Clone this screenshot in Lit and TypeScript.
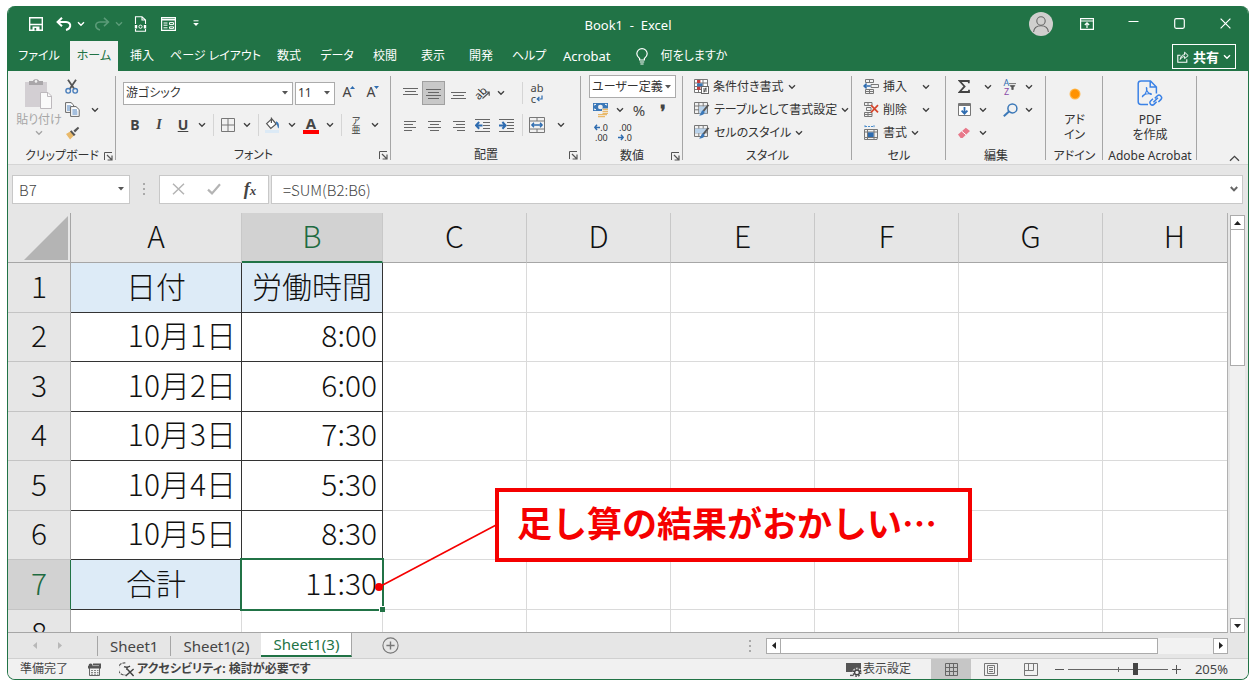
import { LitElement, html, css, svg, nothing, TemplateResult } from "lit";
import { customElement, property, state } from "lit/decorators.js";
import { classMap } from "lit/directives/class-map.js";

/* ---------- icon set ---------- */

const icon = (w: number, h: number, body: unknown) =>
  html`<svg width=${w} height=${h} viewBox="0 0 ${w} ${h}" fill="none" aria-hidden="true">${body}</svg>`;

const lines = (spec: [number, number, number][], color = "#666") =>
  svg`${spec.map(([x, y, w]) => svg`<rect x=${x} y=${y} width=${w} height="1" fill=${color} />`)}`;

const chevron = (color = "#444") =>
  icon(8, 6, svg`<path d="M1 1.2 4 4.2 7 1.2" stroke=${color} stroke-width="1.4" />`);

const triDown = () => icon(6, 4, svg`<path d="M0 0H6L3 3.6Z" fill="#555" />`);

const grid9 = svg`<path d="M.5 .5H13.5V11.5H.5ZM.5 4H13.5M.5 7.8H13.5M4.8 .5V11.5M9.2 .5V11.5" stroke="#777" />`;

const brush = svg`<path d="M15.3 3.2 10.2 9.6 8.6 8.4 13.6 2.4Z" fill="#555" /><path d="M8.8 8.2 10.6 9.8C10.5 12.5 8 14 5 13.2 7.2 12.4 6.8 9 8.8 8.2Z" fill="#3b78b8" />`;

const icons: Record<string, () => TemplateResult> = {
  save: () => icon(14, 14, svg`<path d="M.7 .7H13.3V13.3H.7Z" stroke="#fff" stroke-width="1.4" /><path d="M1 7.5H13" stroke="#fff" stroke-width="1.4" /><path d="M3.5 14V9.5H10.5V14Z" fill="#fff" /><path d="M5.5 11H7.2V13.4H5.5Z" fill="#217346" />`),
  undo: () => icon(16, 14, svg`<path d="M6 .8 1.6 5 6 9.2M2 5H10C13 5 14.6 7 14.2 9.2 13.9 11.2 12.4 12.4 10 13" stroke="#fff" stroke-width="2" />`),
  redo: () => icon(16, 14, svg`<path d="M10 .8 14.4 5 10 9.2M14 5H6C3 5 1.4 7 1.8 9.2 2.1 11.2 3.6 12.4 6 13" stroke="#5b9b78" stroke-width="1.6" />`),
  preview: () => icon(13, 16, svg`<path d="M1.5 8V.7H8L11.5 4V8M8 .7V4H11.5" stroke="#fff" stroke-width="1.1" /><path d="M.8 9H3.2V12.4H.8ZM9.8 9H12.2V12.4H9.8Z" fill="#fff" /><circle cx="6.5" cy="10.7" r="1.6" stroke="#fff" /><path d="M1.5 13V15.3H11.5V13" stroke="#fff" stroke-width="1.1" />`),
  form: () => icon(15, 14, svg`<path d="M.6 .6H14.4V13.4H.6Z" stroke="#fff" stroke-width="1.2" /><path d="M1 2.6H14" stroke="#fff" stroke-width="1.6" /><path d="M2.5 6H6.5M2.5 8.2H6.5M2.5 10.8H6.5M8.5 5.6H12.5V7.6H8.5ZM8.5 9.8H12.5V11.4H8.5Z" stroke="#fff" />`),
  more: () => icon(6, 7, svg`<path d="M.5 .8H5.5" stroke="#fff" /><path d="M.2 3H5.8L3 6Z" fill="#fff" />`),
  avatar: () => icon(24, 24, svg`<circle cx="12" cy="12" r="12" fill="#d0cfce" /><circle cx="12" cy="9" r="4.2" stroke="#666" stroke-width="1.1" /><path d="M4.6 20C5 15.6 8 13.8 12 13.8S19 15.6 19.4 20" stroke="#666" stroke-width="1.1" />`),
  ribbonOpts: () => icon(14, 12, svg`<path d="M.6 .6H13.4V11.4H.6ZM.6 3H13.4" stroke="#fff" stroke-width="1.2" /><path d="M7 10V5M4.8 7 7 4.8 9.2 7" stroke="#fff" stroke-width="1.2" />`),
  min: () => icon(11, 11, svg`<path d="M.5 3.5H10.5" stroke="#fff" stroke-width="1.2" />`),
  max: () => icon(11, 11, svg`<rect x=".7" y=".7" width="9.6" height="9.6" rx="1.5" stroke="#fff" stroke-width="1.2" />`),
  close: () => icon(11, 11, svg`<path d="M.6 .6 10.4 10.4M10.4 .6 .6 10.4" stroke="#fff" stroke-width="1.2" />`),
  bulb: () => icon(12, 17, svg`<path d="M3.6 12V10.4C2 9.2 .8 7.8 .8 5.8A5.2 5.2 0 0 1 11.2 5.8C11.2 7.8 10 9.2 8.4 10.4V12ZM3.8 14H8.2M4.4 16H7.6" stroke="#fff" stroke-width="1.2" />`),
  share: () => icon(12, 12, svg`<path d="M3.5 4.2H.8V11.2H9.8V8.2" stroke="#fff" stroke-width="1.1" /><path d="M3.2 8.5C3.4 5.5 5 3.8 7.6 3.8V1.2L11.2 4.6 7.6 7.6V5.6C5.6 5.6 4.2 6.5 3.2 8.5Z" stroke="#fff" />`),
  paste: () => icon(28, 32, svg`<rect x="0" y="4" width="22" height="25" fill="#d3cfd3" /><path d="M4 3H8C8 .5 14 .5 14 3H18V7H4Z" fill="#a9a6a9" /><circle cx="11" cy="3.4" r="1.3" fill="#f1f1f1" /><path d="M15.5 14.5H23L26.5 18V30.5H15.5Z" fill="#fafafa" stroke="#bdb9bd" /><path d="M22.5 14.5V18.5H26.5" stroke="#bdb9bd" />`),
  cut: () => icon(14, 15, svg`<path d="M3 .8 9.3 10M11 .8 4.7 10" stroke="#555" stroke-width="1.8" /><circle cx="3.2" cy="11.8" r="2.3" stroke="#4a7ebb" stroke-width="1.4" /><circle cx="10.2" cy="11.8" r="2.3" stroke="#4a7ebb" stroke-width="1.4" />`),
  copy: () => icon(15, 15, svg`<path d="M.6 .6H6L8.6 3V10.4H.6Z" fill="#fff" stroke="#666" /><path d="M2 4H6M2 6H6M2 8H5" stroke="#4a7ebb" /><path d="M5.6 4.6H11L14.2 7.6V14.4H5.6Z" fill="#fff" stroke="#666" /><path d="M7.4 8H12M7.4 10H12.4M7.4 12H12.4" stroke="#4a7ebb" />`),
  painter: () => icon(15, 14, svg`<path d="M1 8 6 5 9.5 9 5 13.5C4 12 2.5 10 1 8Z" fill="#e9b96a" /><path d="M6.4 4.2 10.6 8.8 8.8 10 5 5.4Z" fill="#555" /><path d="M8.5 4.5 13 .8 14.2 2.2 10 6.4Z" fill="#555" />`),
  launcher: () => icon(9, 9, svg`<path d="M.5 8V.5H8" stroke="#555" /><path d="M3 3 7.5 7.5M8 3.6V8H3.6" stroke="#555" stroke-width="1.2" />`),
  borders: () => icon(14, 14, svg`<path d="M.5 .5H13.5V13.5H.5ZM7 .5V13.5M.5 7H13.5" stroke="#777" />`),
  fill: () => icon(16, 16, svg`<rect x="0" y="13" width="14" height="3" fill="#dceaf6" /><path d="M1.6 6.6 6.8 1.8 11.2 7 5.8 11.4Z" fill="#fff" stroke="#555" stroke-width="1.2" /><path d="M6.4 6V.6" stroke="#555" stroke-width="1.2" /><path d="M11 4.2C13.8 5 14.6 8 13.6 11.6 12.4 10.8 12.6 8 11 6.2Z" fill="#3b78b8" />`),
  alignTop: () => icon(15, 15, lines([[0, 2, 15], [2, 5, 11], [0, 8, 15]])),
  alignMid: () => icon(15, 15, lines([[0, 3, 15], [2, 6, 11], [0, 9, 15], [2, 12, 11]])),
  alignBot: () => icon(15, 15, lines([[0, 6, 15], [2, 9, 11], [0, 12, 15], [2, 15, 11]])),
  alignL: () => icon(13, 13, lines([[0, 2, 12], [0, 5, 9], [0, 8, 12], [0, 11, 8]])),
  alignC: () => icon(13, 13, lines([[0, 2, 13], [2, 5, 9], [0, 8, 13], [2, 11, 9]])),
  alignR: () => icon(13, 13, lines([[1, 2, 12], [4, 5, 9], [1, 8, 12], [5, 11, 8]])),
  outdent: () => icon(15, 13, svg`${lines([[0, 0, 15], [8, 3, 7], [8, 6, 7], [8, 9, 7], [0, 12, 15]])}<path d="M4.2 3 1 6.4 4.2 9.8M1 6.4H7.5" stroke="#2e6cb0" stroke-width="2" />`),
  indent: () => icon(15, 13, svg`${lines([[0, 0, 15], [8, 3, 7], [8, 6, 7], [8, 9, 7], [0, 12, 15]])}<path d="M3.4 3 6.6 6.4 3.4 9.8M6.6 6.4H0" stroke="#2e6cb0" stroke-width="2" />`),
  wrapArrow: () => icon(7, 7, svg`<path d="M6 .5V4H1.5M3.4 1.8 1.2 4 3.4 6.2" stroke="#2e6cb0" stroke-width="1.2" />`),
  slope: () => icon(8, 8, svg`<path d="M.5 7.5 7 1.5M3.5 1H7.2V4.8" stroke="#555" stroke-width="1.2" />`),
  merge: () => icon(16, 16, svg`<path d="M.5 .5H15.5V15.5H.5ZM.5 4H15.5M.5 12H15.5M8 .5V4M8 12V15.5" stroke="#777" /><path d="M3 8H13M5 5.8 2.8 8 5 10.2M11 5.8 13.2 8 11 10.2" stroke="#2e6cb0" stroke-width="1.3" />`),
  money: () => icon(16, 16, svg`<rect x="0" y="1" width="15" height="8" fill="#3b78b8" /><path d="M1.4 3.4V2.4H3M12 2.4H13.6V3.4M1.4 6.6V7.6H3" stroke="#fff" /><ellipse cx="7.4" cy="5" rx="2.4" ry="2.2" fill="#f1f1f1" /><path d="M9 6.5H15V9H9ZM7 9.5H15V15H5V12H7Z" fill="#f1f1f1" /><path d="M9.5 7.4H15M9.5 9.4H15M9.5 11.4H15M5 12.6H14M5 14.6H12" stroke="#e9b96a" stroke-width="1.3" />`),
  decLeft: () => icon(6, 7, svg`<path d="M3 .8 .8 3.4 3 6M.8 3.4H6" stroke="#2e6cb0" stroke-width="1.5" />`),
  decRight: () => icon(6, 7, svg`<path d="M3 .8 5.2 3.4 3 6M5.2 3.4H0" stroke="#2e6cb0" stroke-width="1.5" />`),
  cond: () => icon(15, 15, svg`<path d="M.5 .5H13.5V13.5H.5ZM.5 4H13.5M.5 7.5H13.5M.5 10.5H13.5M4.5 .5V13.5M9 .5V13.5" stroke="#777" fill="#fff" /><rect x="3" y="1" width="3.4" height="3" fill="#c43e3e" /><rect x="3" y="4.4" width="5.6" height="3" fill="#3b78b8" /><rect x="3" y="7.8" width="3.4" height="3" fill="#c43e3e" /><rect x="7.5" y="7.5" width="7" height="7" fill="#fff" stroke="#666" /><path d="M9 10H13M9 12H13M12 8.6 10 13.4" stroke="#444" stroke-width=".9" />`),
  tableFmt: () => icon(16, 15, svg`${grid9}<rect x="5" y="4.4" width="8" height="7" fill="#b9d2ea" />${brush}`),
  cellFmt: () => icon(16, 15, svg`${grid9}<rect x="1" y="3.6" width="11" height="4.6" fill="#b9d2ea" />${brush}`),
  insert: () => icon(16, 15, svg`<path d="M2.5 .5H10.5V3.5H2.5ZM6.5 .5V3.5M2.5 10.5H10.5V14.5H2.5ZM6.5 10.5V14.5M2.5 12.5H10.5M8 5.5H15.5V8.5H8Z" stroke="#777" /><path d="M7.5 7H1.2M3.6 4.6 1 7 3.6 9.4" stroke="#2e6cb0" stroke-width="1.5" />`),
  remove: () => icon(16, 15, svg`<path d="M1.5 .5H9V3.5H1.5ZM5 .5V3.5M1.5 10.5H9V14.5H1.5ZM5 10.5V14.5M1.5 12.5H9M3.5 5.5H8V8.5H3.5Z" stroke="#777" /><path d="M8 3.2 15 10.4M15 3.2 8 10.4" stroke="#d5452b" stroke-width="1.7" />`),
  format: () => icon(16, 16, svg`<path d="M2 1.5H11M2 .2V2.8M11 .2V2.8" stroke="#4a8ccb" stroke-dasharray="2 1" /><path d="M1.5 4.5H14.5V12.5H1.5ZM4.5 4.5V14.5M11 4.5V14.5M1.5 7H14.5M1.5 12.5V14.5H14L14.5 12" stroke="#777" /><rect x="5" y="7.4" width="5.6" height="4.6" fill="#2e6cb0" />`),
  sigma: () => icon(12, 13, svg`<path d="M10.8 3.2V1H1.6L6.6 6.4 1.6 12H11V9.8" stroke="#444" stroke-width="1.8" />`),
  fillDown: () => icon(13, 13, svg`<path d="M.5 .5H12.5V12.5H.5Z" fill="#fff" stroke="#777" /><path d="M.5 2H12.5" stroke="#777" stroke-width="2" /><path d="M6.5 4V10.4M3.6 7.6 6.5 10.6 9.4 7.6" stroke="#2e6cb0" stroke-width="1.8" />`),
  eraser: () => icon(14, 12, svg`<path d="M1 7.4 8.8 .8 13 4 5.6 11H3.6Z" fill="#e8788a" /><path d="M4.8 4.2 9 7.8" stroke="#fff" />`),
  funnel: () => icon(7, 7, svg`<path d="M0 .6H7M1.2 2.6H5.8L4.2 4.6V6.6H2.8V4.6Z" stroke="#555" fill="#555" stroke-width=".8" />`),
  find: () => icon(15, 14, svg`<circle cx="9.4" cy="5.4" r="4.5" stroke="#3b78b8" stroke-width="1.5" /><path d="M6 8.6 .8 13.2" stroke="#3b78b8" stroke-width="2" />`),
  dot: () => icon(12, 12, svg`<circle cx="6" cy="6" r="5.5" fill="#ffb84d" /><circle cx="6" cy="6" r="4.4" fill="#ff9200" />`),
  pdf: () => icon(26, 28, svg`<path d="M11 24.5H4C2.4 24.5 1.2 23.4 1.2 21.8V3.6C1.2 2 2.4 1 4 1H13.5L19.4 7V13.4M13.2 1.2V7H19.2" stroke="#3b82e6" stroke-width="1.5" /><path d="M9.4 7.6C11 8 8.4 15.6 5.4 16.8 4.6 14.6 13.4 12.4 14.4 14 13 15.6 8.6 10.4 9.4 7.6Z" stroke="#3b82e6" stroke-width="1.2" /><path d="M17.8 18.4 20.4 15.8C22.6 13.8 26 17 24 19.4L21.4 22M19.6 21.8 17 24.4C14.8 26.6 11.4 23.2 13.6 21L16 18.8M16.4 22.2 21 17.8" stroke="#3b82e6" stroke-width="1.5" />`),
  collapse: () => icon(11, 7, svg`<path d="M1 5.8 5.5 1.4 10 5.8" stroke="#444" stroke-width="1.3" />`),
  dots: () => icon(3, 12, svg`<path d="M0 0H2V2H0ZM0 5H2V7H0ZM0 10H2V12H0Z" fill="#aaa" />`),
  cancel: () => icon(13, 12, svg`<path d="M1 .8 12 11.2M12 .8 1 11.2" stroke="#b4b4b4" stroke-width="1.5" />`),
  ok: () => icon(14, 12, svg`<path d="M1 6.6 5 10.4 13 1.2" stroke="#b4b4b4" stroke-width="2.2" />`),
  up: () => icon(7, 4, svg`<path d="M0 4H7L3.5 0Z" fill="#222" />`),
  down: () => icon(7, 4, svg`<path d="M0 0H7L3.5 4Z" fill="#222" />`),
  left: () => icon(4, 7, svg`<path d="M4 0V7L0 3.5Z" fill="#222" />`),
  right: () => icon(4, 7, svg`<path d="M0 0V7L4 3.5Z" fill="#222" />`),
  leftDim: () => icon(4, 7, svg`<path d="M4 0V7L0 3.5Z" fill="#b8b8b8" />`),
  rightDim: () => icon(4, 7, svg`<path d="M0 0V7L4 3.5Z" fill="#b8b8b8" />`),
  plus: () => icon(17, 17, svg`<circle cx="8.5" cy="8.5" r="7.6" stroke="#777" stroke-width="1.1" /><path d="M8.5 4.4V12.6M4.4 8.5H12.6" stroke="#777" stroke-width="1.4" />`),
  macro: () => icon(13, 13, svg`<path d="M1.5 3.5H11.5V12.5H1.5Z" stroke="#666" /><path d="M5 1.5H12V4.5H1V3" stroke="#555" stroke-width="2" /><circle cx="2.6" cy="2.6" r="2" fill="#555" /><path d="M3 7.5H10.5M3 9.5H10.5M3 11.2H10.5" stroke="#888" stroke-dasharray="2 1" />`),
  access: () => icon(16, 15, svg`<path d="M6.4 1A6 6 0 1 0 6.4 12.8" stroke="#555" stroke-width="1.1" stroke-dasharray="3 1" /><path d="M5 4.6C7 5.4 9 5.4 11 4.2M8 5.2V8M8.6 7.6 14.6 14M14.6 7 6.6 14" stroke="#444" stroke-width="1.5" />`),
  display: () => icon(16, 15, svg`<path d="M0 1H15V10H0Z" fill="#555" /><path d="M4 13.4H9" stroke="#555" stroke-width="1.4" /><circle cx="11" cy="10.4" r="4.6" fill="#f1f1f1" /><circle cx="11" cy="10.4" r="2.4" stroke="#444" stroke-width="1.4" /><circle cx="11" cy="10.4" r="3.8" stroke="#444" stroke-width="1.4" stroke-dasharray="1.6 1.4" />`),
  viewNormal: () => icon(13, 13, svg`<path d="M.5 .5H12.5V12.5H.5ZM4.5 .5V12.5M8.5 .5V12.5M.5 4.5H12.5M.5 8.5H12.5" stroke="#666" />`),
  viewPage: () => icon(14, 13, svg`<path d="M.5 .5H13.5V12.5H.5ZM3.5 2.5H10.5V10.5H3.5Z" stroke="#777" /><path d="M5 4.5H9M5 6.5H9M5 8.5H9" stroke="#777" />`),
  viewBreak: () => icon(14, 13, svg`<path d="M.5 .5H13.5V12.5H.5ZM.5 7.5H9.5V.5M4.5 .5V7.5" stroke="#777" />`),
};

const drop = (label: string, color?: string) =>
  html`<button class="chev" aria-label=${label}>${chevron(color)}</button>`;

const tool = (name: string, label: string) =>
  html`<button class="tool" aria-label=${label}>${icons[name]()}</button>`;

const named = (name: string, text: string, wide = false) =>
  html`<button class=${classMap({ named: true, wide })}>${icons[name]()}<span>${text}</span>${chevron()}</button>`;

/* ---------- shared styles ---------- */

const base = css`
  :host, * { box-sizing: border-box; }
  button, input, select {
    font: inherit; color: inherit; background: none; border: 0; margin: 0; padding: 0;
    font-feature-settings: inherit; border-radius: 0; outline: none;
  }
  button { display: inline-flex; align-items: center; justify-content: center; white-space: nowrap; }
  svg { display: block; flex: none; }
  select { appearance: none; }
`;

/* ---------- title bar and tabs ---------- */

@customElement("xl-header")
export class XlHeader extends LitElement {
  @state() active = "ホーム";

  static styles = [base, css`
    :host { display: block; background: #217346; color: #fff; }
    .title { display: grid; grid-template-columns: 1fr auto 1fr; align-items: center; height: 35px; }
    .quick { display: flex; align-items: center; padding-left: 14px; }
    .quick button { width: 28px; height: 28px; }
    .quick .arrow { width: 10px; margin-right: 2px; margin-left: -2px; }
    .name { white-space: pre; font-size: 13px; padding-top: 2px; }
    .win { display: flex; justify-content: flex-end; }
    .win button { width: 46px; height: 34px; }
    nav { display: flex; align-items: stretch; height: 30px; padding-right: 12px; }
    .tab { width: 48px; }
    .tab.first { width: 62px; }
    .tab.long { width: auto; padding: 0 4px; }
    .tab.latin { width: auto; padding: 0 10px; font-size: 13px; }
    .tab.on { background: #f1f1f1; color: #217346; }
    .tell { gap: 13px; padding-left: 15px; }
    .share { margin: 3px 0 2px auto; padding: 0 4px; gap: 4px; border: 1px solid #fff; font-weight: 700; font-size: 13px; }
  `];

  render() {
    const tabs = ["ファイル", "ホーム", "挿入", "ページ レイアウト", "数式", "データ", "校閲", "表示", "開発", "ヘルプ", "Acrobat"];
    return html`
      <div class="title">
        <div class="quick">
          <button aria-label="上書き保存">${icons.save()}</button>
          <button aria-label="元に戻す">${icons.undo()}</button>
          <button class="arrow" aria-label="元に戻す履歴">${chevron("#fff")}</button>
          <button aria-label="やり直し">${icons.redo()}</button>
          <button class="arrow" aria-label="やり直し履歴">${chevron("#5b9b78")}</button>
          <button aria-label="印刷プレビュー">${icons.preview()}</button>
          <button aria-label="フォーム">${icons.form()}</button>
          <button aria-label="カスタマイズ">${icons.more()}</button>
        </div>
        <div class="name">Book1  -  Excel</div>
        <div class="win">
          <button aria-label="アカウント">${icons.avatar()}</button>
          <button aria-label="リボンの表示オプション">${icons.ribbonOpts()}</button>
          <button aria-label="最小化">${icons.min()}</button>
          <button aria-label="最大化">${icons.max()}</button>
          <button aria-label="閉じる">${icons.close()}</button>
        </div>
      </div>
      <nav>
        ${tabs.map((t, i) => html`<button
          class=${classMap({ tab: true, first: i === 0, long: t.length > 7, latin: t === "Acrobat", on: t === this.active })}
          @click=${() => (this.active = t)}>${t}</button>`)}
        <button class="tell">${icons.bulb()}<span>何をしますか</span></button>
        <button class="share">${icons.share()}<span>共有</span>${chevron("#fff")}</button>
      </nav>`;
  }
}

/* ---------- ribbon ---------- */

@customElement("xl-group")
export class XlGroup extends LitElement {
  @property() label = "";
  @property({ type: Boolean }) launcher = false;

  static styles = [base, css`
    :host { display: flex; flex-direction: column; flex: none; background: linear-gradient(#a6a6a6, #a6a6a6) right 1px / 1px 84px no-repeat; }
    .body { height: 69px; }
    .foot { display: grid; grid-template-columns: 16px 1fr 16px; align-items: center; height: 18px; margin-top: 3px; text-align: center; white-space: nowrap; }
    .foot.plain { grid-template-columns: 1fr; }
    .foot span { display: flex; justify-content: center; }
    .foot button { height: 18px; }
  `];

  render() {
    return html`
      <div class="body"><slot></slot></div>
      <div class=${classMap({ foot: true, plain: !this.launcher })}>
        ${this.launcher ? html`<i></i>` : nothing}
        <span>${this.label}</span>
        ${this.launcher ? html`<button aria-label="${this.label}の設定">${icons.launcher()}</button>` : nothing}
      </div>`;
  }
}

@customElement("xl-ribbon")
export class XlRibbon extends LitElement {
  static styles = [base, css`
    :host { display: flex; background: #f1f1f1; padding: 4px 0 0; height: 94px; border-bottom: 1px solid #d5d5d5; }
    .w-clip { width: 108px; } .w-font { width: 275px; } .w-align { width: 190px; }
    .w-num { width: 102px; } .w-style { width: 169px; } .w-cell { width: 94px; }
    .w-edit { width: 100px; } .w-add { width: 57px; } .w-pdf { width: 94px; }
    .row { display: flex; align-items: center; height: 23px; }
    .two { display: grid; grid-template-rows: 24px 24px; row-gap: 8px; padding: 6px 0 0 7px; }
    .two .row { height: 24px; }
    .tool { width: 24px; height: 24px; }
    .chev { width: 14px; height: 22px; }
    .gap { width: 5px; }
    .sep { width: 1px; height: 22px; margin: 0 2px 0 4px; background: #d5d5d5; }
    .sep.far { margin-left: 14px; }
    .box { display: grid; align-items: center; height: 23px; margin-right: 2px; background: #fff; border: 1px solid #ababab; }
    .box select, .box svg { grid-area: 1 / 1; }
    .box select { width: 100%; padding-left: 2px; color: #333; }
    .box svg { justify-self: end; margin-right: 4px; pointer-events: none; }
    .box.name { width: 170px; } .box.size { width: 40px; } .box.format { width: 87px; }
    .bold { font-weight: 700; font-size: 14px; color: #444; }
    .italic { font-style: italic; font-family: "Liberation Serif", serif; }
    .under { text-decoration: underline; }
    .grow { font-size: 14px; color: #444; align-items: flex-start; padding-top: 3px; }
    .grow svg { margin-left: -1px; }
    .ink { flex-direction: column; font-weight: 700; font-size: 15px; line-height: 13px; color: #444; border-bottom: 4px solid red; width: 16px; height: 17px; margin: 0 4px; }
    .ruby { flex-direction: column; font-size: 9px; line-height: 9px; }
    .ruby span { height: 9px; }
    .on { background: #c8c8c8; border: 1px solid #a0a0a0; width: 23px; margin-right: 1px; }
    .clip { display: grid; grid-template-columns: 56px 16px 1fr; }
    .paste { flex-direction: column; color: #a6a6a6; gap: 2px; justify-content: flex-start; padding: 3px 0 0 6px; }
    .stack { display: grid; grid-template-rows: repeat(3, 23px); align-items: center; }
    .stack .tool { width: 16px; height: 23px; }
    .stack .chev { margin-left: 8px; }
    .named { height: 23px; gap: 4px; justify-content: flex-start; padding-left: 11px; width: 100%; }
    .named.wide span { flex: 1; text-align: left; }
    .named.wide { padding-right: 16px; }
    .named span { white-space: nowrap; }
    .num { padding-left: 8px; }
    .pct { font-size: 15px; color: #444; }
    .comma { font-weight: 700; font-size: 18px; color: #444; padding-top: 3px; }
    .dec { display: grid; grid-template-columns: auto auto; justify-content: center; align-content: center; align-items: center; font-size: 9px; line-height: 10px; color: #333; }
    .dec .full { grid-column: 1 / 3; text-align: right; }
    .edit { display: grid; grid-template-columns: 46px 1fr; padding-left: 6px; }
    .wrap { display: grid; grid-template-columns: auto auto; justify-content: center; align-content: center; align-items: center; font-size: 11px; line-height: 11px; color: #444; }
    .wrap .full { grid-column: 1 / 3; }
    .diag { display: inline-block; transform: rotate(-45deg); font-size: 11px; }
    .slope svg { margin-left: -4px; margin-top: 4px; }
    .az { display: grid; font-size: 9px; line-height: 9px; color: #2e6cb0; }
    .az b { font-weight: 400; }
    .az b + b { color: #8a4aa8; }
    .big { flex-direction: column; width: 100%; height: 69px; justify-content: flex-start; line-height: 15px; }
    .big svg { height: 28px; margin: 5px 0 4px; }
    .tail { flex: 1; display: flex; align-items: flex-end; justify-content: flex-end; padding: 0 8px 2px 0; }
  `];

  render() {
    return html`
      <xl-group class="w-clip" label="クリップボード" launcher>
        <div class="clip">
          <button class="paste">${icons.paste()}<span>貼り付け</span>${chevron("#a6a6a6")}</button>
          <div class="stack">
            ${tool("cut", "切り取り")}${tool("copy", "コピー")}${tool("painter", "書式のコピー")}
          </div>
          <div class="stack"><i></i>${drop("コピーのオプション")}</div>
        </div>
      </xl-group>

      <xl-group class="w-font" label="フォント" launcher>
        <div class="two">
          <div class="row">
            <label class="box name"><select aria-label="フォント名"><option>游ゴシック</option></select>${triDown()}</label>
            <label class="box size"><select aria-label="フォント サイズ"><option>11</option></select>${triDown()}</label>
            <button class="tool grow" aria-label="拡大">A${icon(5, 8, svg`<path d="M0 5 2.5 2 5 5Z" fill="#2e6cb0" />`)}</button>
            <button class="tool grow" aria-label="縮小">A${icon(5, 8, svg`<path d="M0 2H5L2.5 5Z" fill="#2e6cb0" />`)}</button>
          </div>
          <div class="row">
            <button class="tool bold">B</button>
            <button class="tool bold italic">I</button>
            <button class="tool bold under">U</button>
            ${drop("下線")}<i class="sep"></i>
            ${tool("borders", "罫線")}${drop("罫線の種類")}<i class="sep"></i>
            ${tool("fill", "塗りつぶしの色")}${drop("塗りつぶしの色の選択")}
            <button class="ink">A</button>${drop("フォントの色の選択")}<i class="sep"></i>
            <button class="tool ruby"><span>ア</span><span>亜</span></button>${drop("ふりがな")}
          </div>
        </div>
      </xl-group>

      <xl-group class="w-align" label="配置" launcher>
        <div class="two">
          <div class="row">
            ${tool("alignTop", "上揃え")}
            <button class="tool on" aria-label="上下中央揃え">${icons.alignMid()}</button>
            ${tool("alignBot", "下揃え")}
            <button class="tool slope" aria-label="方向"><span class="diag">ab</span>${icons.slope()}</button>
            ${drop("方向の選択")}<i class="sep far"></i>
            <button class="tool wrap"><span class="full">ab</span><span>c</span>${icons.wrapArrow()}</button>
          </div>
          <div class="row">
            ${tool("alignL", "左揃え")}${tool("alignC", "中央揃え")}${tool("alignR", "右揃え")}
            ${tool("outdent", "インデントを減らす")}${tool("indent", "インデントを増やす")}<i class="sep"></i>
            ${tool("merge", "セルを結合して中央揃え")}<i class="gap"></i>${drop("結合の選択")}
          </div>
        </div>
      </xl-group>

      <xl-group class="w-num" label="数値" launcher>
        <div class="num">
          <div class="row">
            <label class="box format"><select aria-label="表示形式"><option>ユーザー定義</option></select>${triDown()}</label>
          </div>
          <div class="row">
            ${tool("money", "通貨")}${drop("通貨の選択")}
            <button class="tool pct">%</button><button class="tool comma">❜</button>
          </div>
          <div class="row">
            <button class="tool dec">${icons.decLeft()}<span>.0</span><span class="full">.00</span></button>
            <button class="tool dec"><span class="full">.00</span>${icons.decRight()}<span>.0</span></button>
          </div>
        </div>
      </xl-group>

      <xl-group class="w-style" label="スタイル">
        <div class="stack">
          ${named("cond", "条件付き書式")}
          ${named("tableFmt", "テーブルとして書式設定")}
          ${named("cellFmt", "セルのスタイル")}
        </div>
      </xl-group>

      <xl-group class="w-cell" label="セル">
        <div class="stack">
          ${named("insert", "挿入", true)}
          ${named("remove", "削除", true)}
          ${named("format", "書式")}
        </div>
      </xl-group>

      <xl-group class="w-edit" label="編集">
        <div class="edit">
          <div>
            <div class="row">${tool("sigma", "オート SUM")}<i class="gap"></i>${drop("関数の選択")}</div>
            <div class="row">${tool("fillDown", "フィル")}${drop("フィルの選択")}</div>
            <div class="row">${tool("eraser", "クリア")}${drop("クリアの選択")}</div>
          </div>
          <div>
            <div class="row"><button class="tool" aria-label="並べ替えとフィルター"><span class="az"><b>A</b><b>Z</b></span>${icons.funnel()}</button>${drop("並べ替えの選択")}</div>
            <div class="row">${tool("find", "検索と選択")}${drop("検索の選択")}</div>
          </div>
        </div>
      </xl-group>

      <xl-group class="w-add" label="アドイン">
        <button class="big">${icons.dot()}<span>アド<br />イン</span></button>
      </xl-group>

      <xl-group class="w-pdf" label="Adobe Acrobat">
        <button class="big">${icons.pdf()}<span>PDF<br />を作成</span></button>
      </xl-group>

      <div class="tail"><button aria-label="リボンを折りたたむ">${icons.collapse()}</button></div>`;
  }
}

/* ---------- formula bar ---------- */

@customElement("xl-formula")
export class XlFormula extends LitElement {
  static styles = [base, css`
    :host { display: flex; align-items: center; height: 48px; padding: 0 5px 0 4px; background: #e6e6e6; color: #444; font-size: 15px; font-family: "Noto Sans CJK JP", sans-serif; font-weight: 300; }
    .field { display: flex; align-items: center; height: 29px; background: #fff; border: 1px solid #c8c8c8; }
    input { min-width: 0; flex: 1; height: 100%; padding-left: 6px; }
    .ref { width: 118px; padding-right: 5px; }
    .grip { width: 29px; display: flex; justify-content: center; }
    .acts { width: 110px; margin-right: 2px; justify-content: space-around; }
    .acts button { width: 36px; height: 27px; }
    .fx { font-family: "Liberation Serif", serif; font-style: italic; font-weight: 700; font-size: 18px; line-height: 20px; }
    .fx small { font-size: 13px; padding-top: 3px; }
    .text { flex: 1; padding-right: 4px; }
    .text input { padding-left: 11px; }
  `];

  render() {
    return html`
      <label class="field ref"><input aria-label="名前ボックス" .value=${"B7"} />${triDown()}</label>
      <span class="grip">${icons.dots()}</span>
      <div class="field acts">
        <button aria-label="キャンセル">${icons.cancel()}</button>
        <button aria-label="入力">${icons.ok()}</button>
        <button class="fx" aria-label="関数の挿入">f<small>x</small></button>
      </div>
      <label class="field text"><input aria-label="数式バー" .value=${"=SUM(B2:B6)"} />${icon(8, 6, svg`<path d="M.8 1 4 4.4 7.2 1" stroke="#666" stroke-width="2" />`)}</label>`;
  }
}

/* ---------- worksheet ---------- */

@customElement("xl-sheet")
export class XlSheet extends LitElement {
  private columns = ["A", "B", "C", "D", "E", "F", "G", "H"];
  private rows: string[][] = [
    ["日付", "労働時間"],
    ["10月1日", "8:00"],
    ["10月2日", "6:00"],
    ["10月3日", "7:30"],
    ["10月4日", "5:30"],
    ["10月5日", "8:30"],
    ["合計", "11:30"],
    [],
  ];

  static styles = [base, css`
    :host { display: flex; min-height: 0; background: #e6e6e6; }
    .view { position: relative; flex: 1; min-width: 0; overflow: hidden; border-right: 1px solid #b0b0b0; border-bottom: 1px solid #a6a6a6; font-family: "Noto Sans CJK JP", sans-serif; font-weight: 300; font-size: 30px; color: #111; }
    table { table-layout: fixed; width: 1236px; border-collapse: separate; border-spacing: 0; background: #fff; }
    .c-head { width: 63px; } .c-a { width: 171px; } .c-b { width: 141px; } .c-n { width: 144px; }
    th, td { padding: 0 0 5px; height: 50px; line-height: 43px; font-weight: inherit; white-space: nowrap; border-right: 1px solid #dadada; border-bottom: 1px solid #dadada; vertical-align: middle; overflow: hidden; }
    tbody tr:nth-child(even) > * { height: 49px; }
    th { background: #e6e6e6; border-color: #c4c4c4; text-align: center; }
    thead th { border-bottom-color: #a6a6a6; border-right-color: #c8c8c8; }
    tbody th, thead .corner { border-right-color: #a6a6a6; }
    thead .corner { padding: 0; }
    .corner svg { margin: 1px 2px 0 auto; }
    th.sel { background: #d2d2d2; color: #1e6b41; }
    thead th.sel { border-bottom: 2px solid #217346; padding-bottom: 4px; }
    tbody th.sel { border-right: 1px solid #217346; }
    td.data { border-color: #333; text-align: right; padding-right: 5px; }
    td.fill { background: #ddebf7; text-align: center; padding-right: 0; }
    td.pick { position: relative; overflow: visible; }
    td.pick::before { content: ""; position: absolute; inset: -2px; border: 2px solid #217346; }
    td.pick::after { content: ""; position: absolute; right: -3px; bottom: -3px; width: 5px; height: 5px; background: #217346; box-shadow: -1px -1px 0 #fff; }
    .lead { position: absolute; left: 366px; top: 307px; }
    .note { position: absolute; left: 487px; top: 275px; padding: 4px 18px 0; width: 477px; height: 74px; border: 4px solid #f50000; background: #fff; color: #f50000; font-weight: 700; font-size: 35px; line-height: 52px; white-space: nowrap; font-feature-settings: normal; }
    .scroll { flex: none; width: 20px; padding: 2px 3px 0 2px; display: flex; flex-direction: column; }
    .scroll button { height: 15px; background: #fff; border: 1px solid #ababab; }
    .track { flex: 1; background: #f0f0f0; }
    .thumb { height: 136px; background: #fff; border: 1px solid #ababab; border-top: 0; }
  `];

  render() {
    return html`
      <div class="view">
        <table>
          <colgroup>
            <col class="c-head" /><col class="c-a" /><col class="c-b" />
            ${this.columns.slice(2).map(() => html`<col class="c-n" />`)}
          </colgroup>
          <thead><tr>
            <th class="corner">${icon(44, 44, svg`<path d="M44 0V44H0Z" fill="#b4b4b4" />`)}</th>
            ${this.columns.map((c) => html`<th class=${classMap({ sel: c === "B" })}>${c}</th>`)}
          </tr></thead>
          <tbody>
            ${this.rows.map((cells, r) => html`<tr>
              <th class=${classMap({ sel: r === 6 })}>${r + 1}</th>
              ${this.columns.map((_, c) => html`<td class=${classMap({
                data: c < 2 && r < 7,
                fill: (c < 2 && r === 0) || (c === 0 && r === 6),
                pick: c === 1 && r === 6,
              })}>${cells[c] ?? nothing}</td>`)}
            </tr>`)}
          </tbody>
        </table>
        <svg class="lead" width="126" height="74" viewBox="0 0 126 74" aria-hidden="true">
          <path d="M5 67 124 4" stroke="#f50000" stroke-width="1.6" />
          <circle cx="5" cy="67" r="4" fill="#f50000" />
        </svg>
        <div class="note">足し算の結果がおかしい…</div>
      </div>
      <div class="scroll">
        <button aria-label="上へ">${icons.up()}</button>
        <div class="track"><div class="thumb"></div></div>
        <button aria-label="下へ">${icons.down()}</button>
      </div>`;
  }
}

/* ---------- sheet tabs and status bar ---------- */

@customElement("xl-footer")
export class XlFooter extends LitElement {
  @state() sheet = 2;

  static styles = [base, css`
    :host { display: block; color: #444; }
    .tabs { display: flex; align-items: center; height: 25px; background: #e6e6e6; padding-right: 20px; }
    .step { width: 25px; height: 24px; }
    .steps { display: flex; width: 90px; padding-left: 14px; height: 20px; align-items: center; border-right: 1px solid #a6a6a6; }
    .tab { height: 20px; padding: 0 12px; font-size: 15px; border-right: 1px solid #a6a6a6; }
    .tab.before { border-right: 0; }
    .tab.on { height: 24px; align-self: flex-start; background: #fff; color: #217346; border-bottom: 2px solid #217346; }
    .add { margin-left: 30px; }
    .grip { margin: 0 14px 0 auto; }
    .bar { display: flex; width: 462px; height: 16px; }
    .bar button { width: 15px; background: #fff; border: 1px solid #ababab; }
    .track { flex: 1; background: #f2f2f2; }
    .thumb { width: 377px; height: 16px; background: #fff; border: 1px solid #ababab; border-left: 0; }
    .status { display: flex; align-items: center; height: 21px; background: #f1f1f1; border-top: 1px solid #d0d0d0; padding: 0 20px 0 12px; white-space: nowrap; }
    .macro { margin: 0 18px 0 20px; }
    .a11y { gap: 2px; font-weight: 700; }
    .show { margin-left: auto; margin-right: 20px; gap: 1px; }
    .view { width: 40px; height: 20px; }
    .view.on { background: #c6c6c6; }
    .sign { width: 17px; height: 20px; }
    input { appearance: none; width: 100px; height: 14px; background:
      linear-gradient(#666, #666) 50px 5px / 1px 5px no-repeat,
      linear-gradient(#666, #666) 0 7px / 100% 1px no-repeat; }
    input::-webkit-slider-thumb { appearance: none; width: 5px; height: 12px; background: #444; }
    .pct { width: 34px; margin-left: 9px; text-align: right; font-size: 13px; }
  `];

  render() {
    const names = ["Sheet1", "Sheet1(2)", "Sheet1(3)"];
    return html`
      <div class="tabs">
        <div class="steps">
          <button class="step" aria-label="前のシート">${icons.leftDim()}</button>
          <button class="step" aria-label="次のシート">${icons.rightDim()}</button>
        </div>
        ${names.map((n, i) => html`<button
          class=${classMap({ tab: true, on: i === this.sheet, before: i === this.sheet - 1 })}
          @click=${() => (this.sheet = i)}>${n}</button>`)}
        <button class="add" aria-label="新しいシート">${icons.plus()}</button>
        <span class="grip">${icons.dots()}</span>
        <div class="bar">
          <button aria-label="左へ">${icons.left()}</button>
          <div class="track"><div class="thumb"></div></div>
          <button aria-label="右へ ">${icons.right()}</button>
        </div>
      </div>
      <div class="status">
        <span>準備完了</span>
        <span class="macro">${icons.macro()}</span>
        <button class="a11y">${icons.access()}<span>アクセシビリティ: 検討が必要です</span></button>
        <button class="show">${icons.display()}<span>表示設定</span></button>
        <button class="view on" aria-label="標準">${icons.viewNormal()}</button>
        <button class="view" aria-label="ページ レイアウト">${icons.viewPage()}</button>
        <button class="view" aria-label="改ページ プレビュー">${icons.viewBreak()}</button>
        <button class="sign" aria-label="縮小">${icon(9, 9, svg`<path d="M0 4.5H9" stroke="#555" />`)}</button>
        <input type="range" min="0" max="100" .value=${"68"} aria-label="ズーム" />
        <button class="sign" aria-label="拡大">${icon(9, 9, svg`<path d="M0 4.5H9M4.5 0V9" stroke="#555" />`)}</button>
        <span class="pct">205%</span>
      </div>`;
  }
}

/* ---------- application window ---------- */

@customElement("app-root")
export class AppRoot extends LitElement {
  static styles = css`
    :host { display: block; box-sizing: border-box; height: 100vh; padding: 6px 5px 8px 7px; background: #fff; color: #333; font: 12px/16px "Noto Sans", "Noto Sans CJK JP", sans-serif; font-feature-settings: "palt"; }
    .window { display: flex; flex-direction: column; box-sizing: border-box; height: 100%; overflow: hidden; border: 1px solid #217346; border-top: 0; border-radius: 8px; background: #e6e6e6; }
    xl-header, xl-ribbon, xl-formula, xl-footer { flex: none; }
    xl-sheet { flex: 1; }
  `;

  render() {
    return html`
      <div class="window">
        <xl-header></xl-header>
        <xl-ribbon></xl-ribbon>
        <xl-formula></xl-formula>
        <xl-sheet></xl-sheet>
        <xl-footer></xl-footer>
      </div>`;
  }
}
